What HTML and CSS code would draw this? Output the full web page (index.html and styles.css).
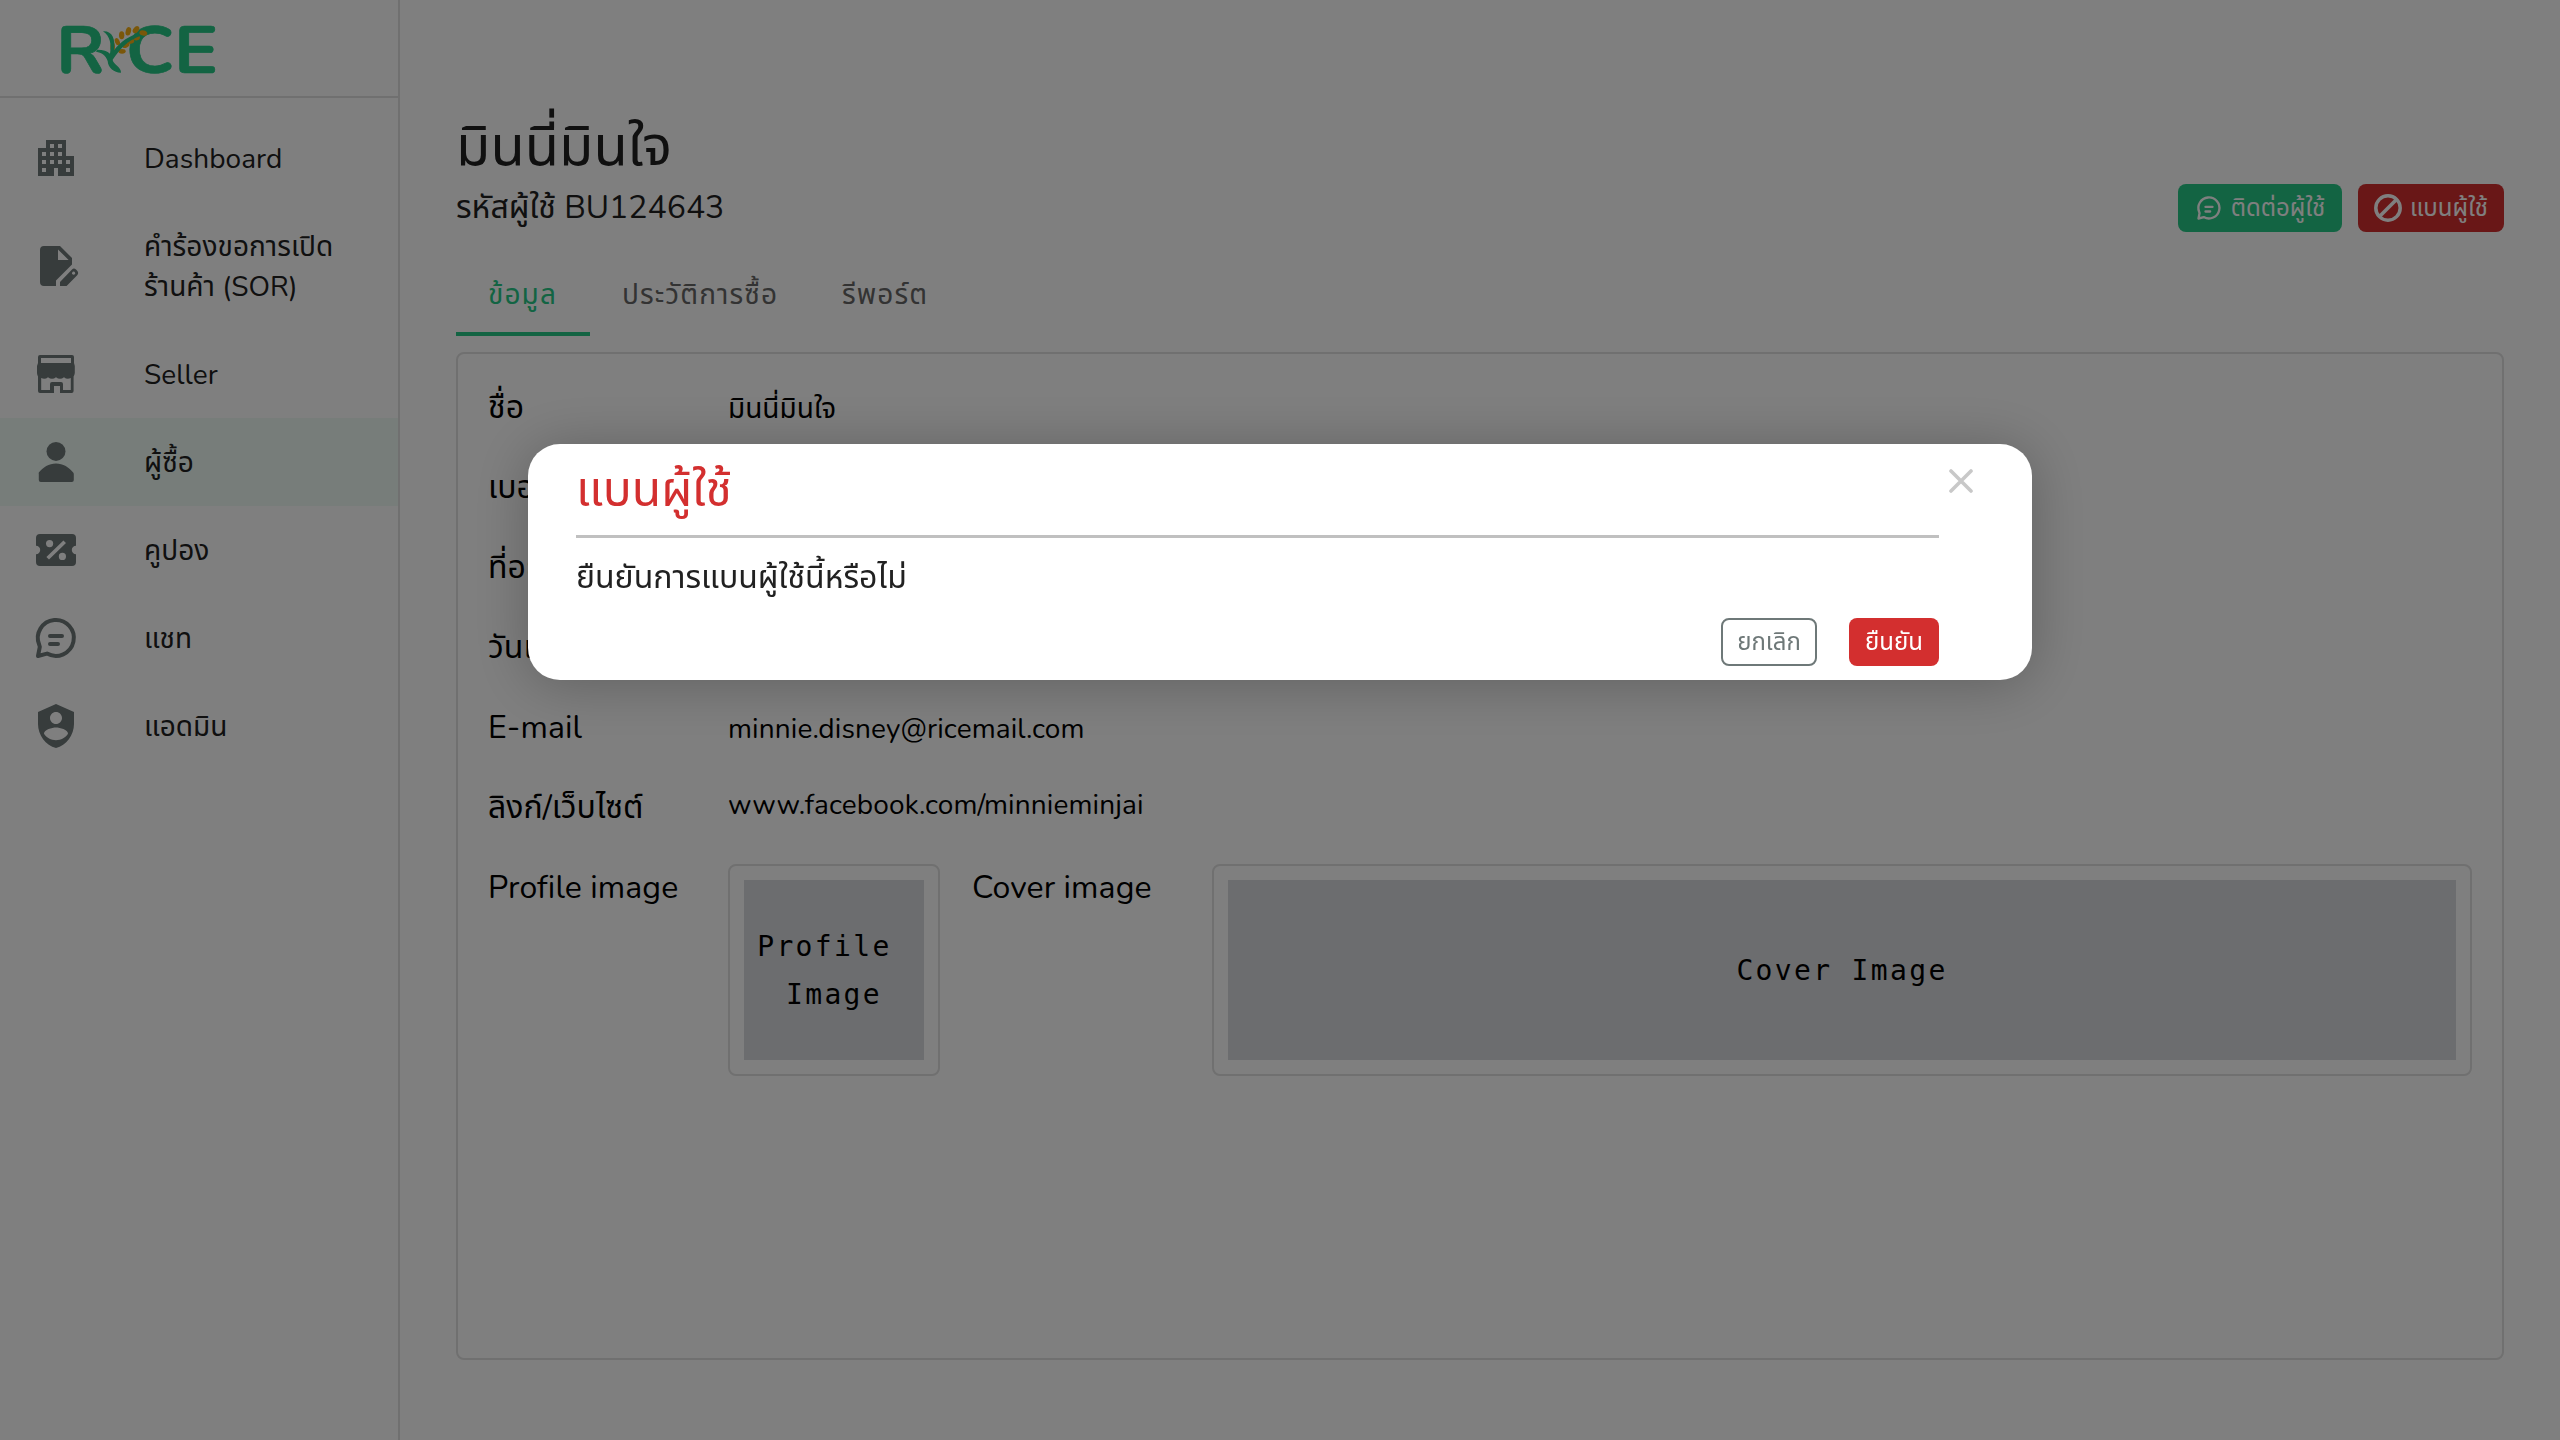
FILE: index.html
```html
<!DOCTYPE html>
<html lang="th">
<head>
<meta charset="utf-8">
<title>RICE Admin</title>
<link rel="stylesheet" href="styles.css">
</head>
<body>
<svg class="sprite" width="0" height="0">
  <symbol id="i-chat" viewBox="0 0 24 24"><path d="M3.600 15.400A9 9 0 1 1 7.500 19.800L3 21l.9-4.600Z" fill="none" stroke="currentColor" stroke-width="2" stroke-linejoin="round"/><path d="M9 11h6M9 15h4" fill="none" stroke="currentColor" stroke-width="2" stroke-linecap="round"/></symbol>
</svg>
<div class="app">
  <aside class="sidebar">
    <div class="brand">
      <svg class="logo" viewBox="60 45 470 150">
        <g class="logo-letters">
          <text x="49" y="188" textLength="146" lengthAdjust="spacingAndGlyphs">R</text>
          <text x="258" y="188" textLength="144" lengthAdjust="spacingAndGlyphs">C</text>
          <text x="402" y="188" textLength="132" lengthAdjust="spacingAndGlyphs">E</text>
        </g>
        <g class="logo-grain">
          <ellipse cx="245" cy="76" rx="8" ry="12"/>
          <ellipse cx="265" cy="64" rx="8" ry="13" transform="rotate(15 265 64)"/>
          <ellipse cx="288" cy="59" rx="8" ry="12" transform="rotate(40 288 59)"/>
          <ellipse cx="232" cy="95" rx="7" ry="11" transform="rotate(-25 232 95)"/>
          <ellipse cx="218" cy="111" rx="7" ry="14"/>
          <ellipse cx="290" cy="83" rx="10" ry="8" transform="rotate(-15 290 83)"/>
          <ellipse cx="273" cy="94" rx="10" ry="7" transform="rotate(-20 273 94)"/>
          <ellipse cx="258" cy="106" rx="11" ry="7" transform="rotate(-25 258 106)"/>
          <ellipse cx="246" cy="124" rx="11" ry="7"/>
        </g>
        <path class="logo-leaf" d="M189 64C216 62 227 86 222 121C240 96 268 75 305 68L302 77C262 91 241 116 218 149C218 161 245 172 243 188C225 189 204 175 203 153C197 135 185 128 168 125L172 119C190 119 202 123 210 131C215 104 211 79 189 64Z"/>
        <ellipse class="logo-grain" cx="310" cy="69" rx="12" ry="8" transform="rotate(15 310 69)"/>
      </svg>
    </div>
    <nav class="menu">
      <a class="item"><svg class="icon" viewBox="0 0 24 24"><path fill-rule="evenodd" d="M3 7h4V3h10v8h4v10h-8v-4h-2v4H3ZM5 9v2h2V9ZM5 13v2h2v-2ZM5 17v2h2v-2ZM9 5v2h2V5ZM13 5v2h2V5ZM9 9v2h2V9ZM13 9v2h2V9ZM9 13v2h2v-2ZM13 13v2h2v-2ZM17 13v2h2v-2ZM17 17v2h2v-2Z"/></svg><span>Dashboard</span></a>
      <a class="item"><svg class="icon" viewBox="0 0 24 24"><path fill-rule="evenodd" d="M6 2h8l6 6v3.2l-8 8V22H6a2 2 0 0 1-2-2V4a2 2 0 0 1 2-2ZM13 3.7V9h5.300ZM14 20l6-6.300a1.500 1.500 0 0 1 2 .1l.5.500a1.700 1.700 0 0 1 .1 2.300L17.300 22H14ZM20.800 14.800a.8.8 0 1 0 .01 0Z"/></svg><span>คำร้องขอการเปิด<br>ร้านค้า (SOR)</span></a>
      <a class="item"><svg class="icon" viewBox="0 0 24 24"><path fill-rule="evenodd" d="M4 2.500h16a1 1 0 0 1 1 1V6.500l.4 1.500v3.500a4 4 0 0 1-.6 1.800V20.500a1 1 0 0 1-1 1H14V18h-3v3.500H4a1 1 0 0 1-1-1V13.300a4 4 0 0 1-.5-1.800V8L3 6.500v-3a1 1 0 0 1 1-1ZM4.500 4v2.500h15V4ZM4.600 14v6H9v-3a1 1 0 0 1 1-1h4.500a1 1 0 0 1 1 1v3h3.900v-6a3 3 0 0 1-3.400-.4a3.200 3.200 0 0 1-4 0a3.200 3.200 0 0 1-4 0a3 3 0 0 1-3.400.4Z"/></svg><span>Seller</span></a>
      <a class="item selected"><svg class="icon" viewBox="0 0 24 24"><circle cx="12" cy="6.700" r="4.750"/><path d="M3.400 17.300C5.400 14.600 8.500 12.700 12 12.700s6.600 1.900 8.600 4.600q.3.400.3.900V21a1 1 0 0 1-1 1H4.400a1 1 0 0 1-1-1v-2.800q-.1-.5 0-.9Z"/></svg><span>ผู้ซื้อ</span></a>
      <a class="item"><svg class="icon" viewBox="0 0 24 24"><path fill-rule="evenodd" d="M4 4h16a2 2 0 0 1 2 2v3.900a2.100 2.100 0 0 0 0 4.200V18a2 2 0 0 1-2 2H4a2 2 0 0 1-2-2v-3.900a2.100 2.100 0 0 0 0-4.200V6a2 2 0 0 1 2-2ZM7 8.800a1.800 1.800 0 1 0 3.600 0a1.800 1.800 0 1 0-3.600 0ZM13.400 15.200a1.800 1.800 0 1 0 3.600 0a1.800 1.800 0 1 0-3.600 0ZM7.200 15.500l1.300 1.300L17 8.500l-1.300-1.300Z"/></svg><span>คูปอง</span></a>
      <a class="item"><svg class="icon"><use href="#i-chat"/></svg><span>แชท</span></a>
      <a class="item"><svg class="icon" viewBox="0 0 24 24"><path d="M12 1 3 5v6c0 5.550 3.840 10.740 9 12 5.160-1.260 9-6.450 9-12V5Zm0 4c1.660 0 3 1.340 3 3s-1.340 3-3 3-3-1.340-3-3 1.340-3 3-3Zm0 14.100c-2.500 0-4.710-1.280-6-3.220.03-1.990 4-3.080 6-3.080s5.970 1.090 6 3.080c-1.290 1.940-3.500 3.220-6 3.220Z"/></svg><span>แอดมิน</span></a>
    </nav>
  </aside>
  <main class="main">
    <header class="head">
      <div class="who">
        <h1>มินนี่มินใจ</h1>
        <p class="code">รหัสผู้ใช้ BU124643</p>
      </div>
      <div class="actions">
        <button class="btn green"><svg class="bi"><use href="#i-chat"/></svg><span>ติดต่อผู้ใช้</span></button>
        <button class="btn red"><svg class="bi" viewBox="0 0 28 28"><g fill="none" stroke="currentColor" stroke-width="3.500"><circle cx="14" cy="14" r="12.200"/><path d="M5.500 22.500l17-17"/></g></svg><span>แบนผู้ใช้</span></button>
      </div>
    </header>
    <div class="tabs">
      <div class="tab on">ข้อมูล</div>
      <div class="tab w2">ประวัติการซื้อ</div>
      <div class="tab">รีพอร์ต</div>
    </div>
    <section class="panel">
      <div class="row"><div class="label">ชื่อ</div><div class="value thai">มินนี่มินใจ</div></div>
      <div class="row"><div class="label">เบอร์โทรศัพท์</div></div>
      <div class="row"><div class="label">ที่อยู่</div></div>
      <div class="row"><div class="label">วันเกิด</div></div>
      <div class="row"><div class="label">E-mail</div><div class="value">minnie.disney@ricemail.com</div></div>
      <div class="row"><div class="label thai">ลิงก์/เว็บไซต์</div><div class="value raised">www.facebook.com/minnieminjai</div></div>
      <div class="row">
        <div class="label">Profile image</div>
        <div class="frame"><div class="pic">Profile&nbsp;<br>Image</div></div>
        <div class="label cover-label">Cover image</div>
        <div class="frame wide"><div class="pic">Cover Image</div></div>
      </div>
    </section>
  </main>
</div>
<div class="backdrop">
  <div class="modal">
    <div class="modal-body">
      <h2>แบนผู้ใช้</h2>
      <p>ยืนยันการแบนผู้ใช้นี้หรือไม่</p>
      <div class="modal-actions">
        <button class="btn cancel">ยกเลิก</button>
        <button class="btn red confirm">ยืนยัน</button>
      </div>
    </div>
    <svg class="close" viewBox="0 0 24 24"><path d="M2 2l20 20M22 2L2 22" fill="none" stroke="#c8c8c8" stroke-width="3.600" stroke-linecap="round"/></svg>
  </div>
</div>
</body>
</html>
```
FILE: styles.css
```css
* { box-sizing: border-box; }
body, h1, h2, p { margin: 0; font-weight: 400; }
body { width: 2560px; height: 1440px; overflow: hidden; background: #fff; color: #212121;
  font-family: Nunito, "Noto Sans", "Noto Sans Thai", sans-serif; font-size: 28px; line-height: 40px; }
.sprite { position: absolute; }
.app { display: flex; height: 1440px; }
.sidebar { width: 400px; border-right: 2px solid #e0e0e0; }
.brand { height: 98px; padding: 25px 0 0 60px; border-bottom: 2px solid #e0e0e0; }
.logo { display: block; width: 156.670px; height: 50px; overflow: visible; }
.logo-letters { font-family: Nunito, Lato, sans-serif; font-weight: 700; font-size: 197px; fill: #26c886; stroke: #26c886; stroke-width: 2px; }
.logo-grain { fill: #f5ae14; }
.logo-leaf { fill: #26c886; }
.menu { padding-top: 16px; }
.item { display: flex; align-items: center; padding: 24px 32px; white-space: nowrap; letter-spacing: .05px; }
.item span { width: 240px; padding-top: 1px; margin-bottom: -1px; }
.selected { background: #eefaf5; }
.icon { flex: none; width: 48px; height: 48px; margin: -4px 64px -4px 0; fill: #6e7878; color: #6e7878; }
.main { flex: 1; padding: 104px 56px 80px; display: flex; flex-direction: column; white-space: nowrap; }
.head { display: flex; justify-content: space-between; align-items: flex-end; height: 128px; }
h1 { font-size: 56px; line-height: 80px; padding-top: 3px; margin-bottom: -3px; }
.code { font-size: 32px; line-height: 48px; }
.actions { display: flex; gap: 16px; }
.btn { height: 48px; border: 0; border-radius: 8px; padding: 0 16px; display: flex; align-items: center; justify-content: center; font: inherit; font-size: 24px; color: #fff; white-space: nowrap; }
.green { background: #26c886; width: 164px; gap: 8px; }
.red { background: #d32f2f; width: 146px; gap: 8px; }
.bi { width: 28px; height: 28px; flex: none; color: #fff; }
.tabs { display: flex; height: 84px; margin: 20px 0 16px; }
.tab { padding: 1px 32px 0; line-height: 84px; color: #666; letter-spacing: 1.100px; }
.tab.on { width: 134px; color: #26c886; border-bottom: 4px solid #26c886; }
.w2 { width: 220px; }
.panel { flex: 1; border: 2px solid #e0e0e0; border-radius: 8px; padding: 30px; color: #000; }
.row { display: flex; height: 80px; line-height: 48px; }
.label { width: 240px; font-size: 32px; letter-spacing: .1px; }
.value { font-size: 28px; letter-spacing: .130px; padding-top: 1px; }
.thai { letter-spacing: 0; }
.raised { margin-top: -4px; }
.frame { width: 212px; height: 212px; border: 2px solid #e0e0e0; border-radius: 8px; padding: 14px; }
.cover-label { margin-left: 32px; }
.wide { flex: 1; }
.pic { height: 180px; padding-top: 2px; background: #d8dade; display: flex; align-items: center; justify-content: center; text-align: center; font: 28px/48px "DejaVu Sans Mono", monospace; letter-spacing: 2.340px; }
.backdrop { position: fixed; inset: 0; background: rgba(0,0,0,.5); }
.modal { position: absolute; left: 528px; top: 444px; width: 1504px; height: 236px; border-radius: 32px; background: #fff; box-shadow: 0 4px 56px rgba(0,0,0,.25); padding: 20px 48px; display: flex; white-space: nowrap; }
.modal-body { width: 1363px; }
h2 { color: #d32f2f; font-size: 48px; line-height: 53px; height: 74px; border-bottom: 3px solid #c0c0c0; }
.modal p { font-size: 32px; line-height: 48px; margin-top: 16px; }
.modal-actions { display: flex; justify-content: flex-end; gap: 32px; margin-top: 16px; }
.cancel { width: 96px; border: 2px solid #6e7878; background: #fff; color: #6e7878; }
.confirm { width: 90px; }
.close { width: 24px; height: 24px; margin: 5px 0 0 10px; }
```
